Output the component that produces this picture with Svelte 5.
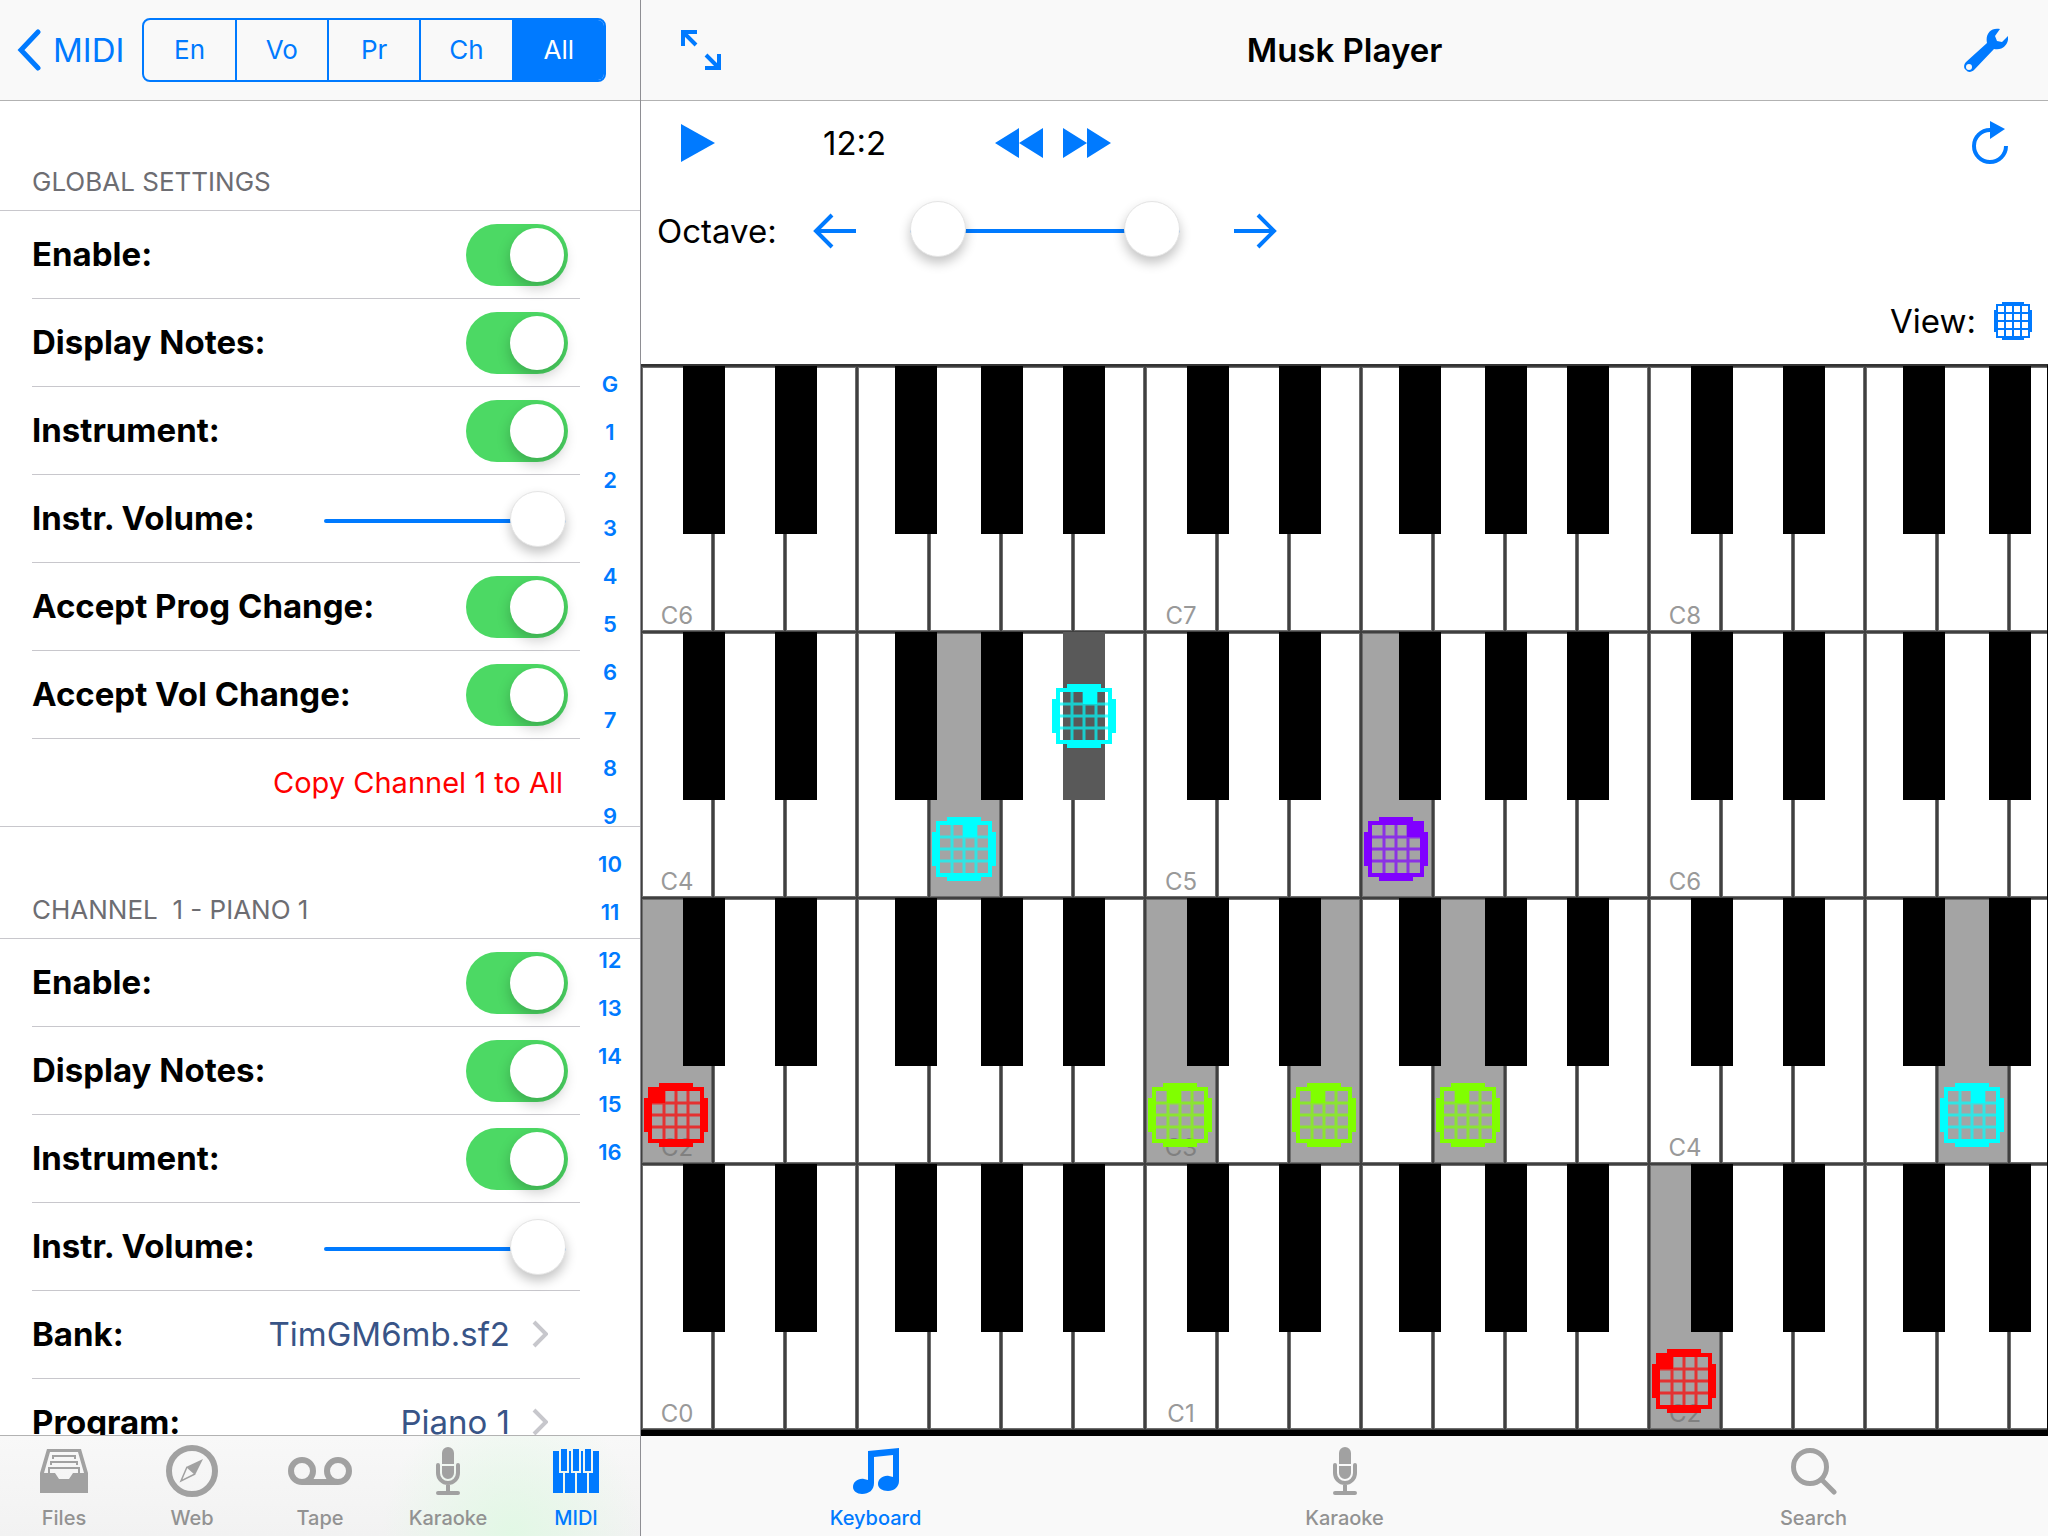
<script lang="ts">
	type Row = { label: string; kind: 'switch' | 'slider' | 'link'; value?: string };
	type Note = { octave: number; key: number; black?: boolean; channel: number };

	const filters = ['En', 'Vo', 'Pr', 'Ch', 'All'];
	let filter = $state('All');

	const globalRows: Row[] = [
		{ label: 'Enable:', kind: 'switch' },
		{ label: 'Display Notes:', kind: 'switch' },
		{ label: 'Instrument:', kind: 'switch' },
		{ label: 'Instr. Volume:', kind: 'slider' },
		{ label: 'Accept Prog Change:', kind: 'switch' },
		{ label: 'Accept Vol Change:', kind: 'switch' }
	];

	const channelRows: Row[] = [
		{ label: 'Enable:', kind: 'switch' },
		{ label: 'Display Notes:', kind: 'switch' },
		{ label: 'Instrument:', kind: 'switch' },
		{ label: 'Instr. Volume:', kind: 'slider' },
		{ label: 'Bank:', kind: 'link', value: 'TimGM6mb.sf2' },
		{ label: 'Program:', kind: 'link', value: 'Piano 1' }
	];

	const sectionIndex = ['G', ...Array.from({ length: 16 }, (_, i) => String(i + 1))];

	const leftTabs = ['Files', 'Web', 'Tape', 'Karaoke', 'MIDI'];
	const rightTabs = ['Keyboard', 'Karaoke', 'Search'];

	// left edge of each black key inside an octave
	const blackKeys = [42, 134, 254, 340, 422];
	const channelColors = ['#ff0000', '#80ff00', '#00ffff', '#8000ff'];

	const keyboards: { base: number; notes: Note[] }[] = [
		{ base: 6, notes: [] },
		{
			base: 4,
			notes: [
				{ octave: 4, key: 4, channel: 2 },
				{ octave: 4, key: 4, black: true, channel: 2 },
				{ octave: 5, key: 3, channel: 3 }
			]
		},
		{
			base: 2,
			notes: [
				{ octave: 2, key: 0, channel: 0 },
				{ octave: 3, key: 0, channel: 1 },
				{ octave: 3, key: 2, channel: 1 },
				{ octave: 3, key: 4, channel: 1 },
				{ octave: 4, key: 4, channel: 2 }
			]
		},
		{ base: 0, notes: [{ octave: 2, key: 0, channel: 0 }] }
	];

	function findNote(notes: Note[], octave: number, key: number, black = false) {
		return notes.find((n) => n.octave === octave && n.key === key && !!n.black === black);
	}
</script>

{#snippet chevron()}
	<svg class="chevron" width="16" height="28" viewBox="0 0 16 28" aria-hidden="true">
		<path d="M2 2l12 12L2 26" fill="none" stroke="#c7c7cc" stroke-width="4" />
	</svg>
{/snippet}

{#snippet marker(channel: number)}
	<svg class="marker" width="64" height="64" viewBox="0 0 64 64" aria-hidden="true">
		<g fill={channelColors[channel]} stroke={channelColors[channel]}>
			<path d="M15 0h34v7H15zM15 57h34v7H15zM0 15h7v34H0zM57 15h7v34h-7z" stroke="none" />
			<rect x="6" y="6" width="52" height="52" fill="none" stroke-width="4" />
			<path
				d="M20 8v48M32 8v48M44 8v48M8 20h48M8 32h48M8 44h48"
				stroke-width="3"
				stroke-opacity="0.7"
			/>
			<rect x={7 + channel * 12} y="6" width="14" height="14" stroke="none" />
		</g>
	</svg>
{/snippet}

{#snippet tabIcon(name: string)}
	{#if name === 'Files'}
		<svg width="48" height="44" viewBox="0 0 48 44" fill="currentColor" aria-hidden="true">
			<path fill-rule="evenodd" d="M7 0h34l7 24v20H0V24zM10 3L4 24h11l4 6h10l4-6h11L38 3z" />
			<path
				d="M13 10V7h22v3M11 16v-3h26v3M9 25v-6h30v6"
				fill="none"
				stroke="currentColor"
				stroke-width="2"
			/>
		</svg>
	{:else if name === 'Web'}
		<svg width="52" height="52" viewBox="0 0 52 52" aria-hidden="true">
			<circle cx="26" cy="26" r="23" fill="none" stroke="currentColor" stroke-width="6" />
			<path d="M37 14L20 22l9 8z" fill="currentColor" />
			<path d="M21 22l-6 14 14-7" fill="none" stroke="currentColor" stroke-width="1.5" />
		</svg>
	{:else if name === 'Tape'}
		<svg width="64" height="28" viewBox="0 0 64 28" aria-hidden="true">
			<g fill="none" stroke="currentColor" stroke-width="6">
				<circle cx="14" cy="14" r="11" />
				<circle cx="50" cy="14" r="11" />
				<path d="M14 25h36" />
			</g>
		</svg>
	{:else if name === 'Karaoke'}
		<svg width="24" height="48" viewBox="0 0 24 48" aria-hidden="true">
			<path d="M6 17V6a6 6 0 0 1 12 0v11zM6 19h12v7a6 6 0 0 1-12 0z" fill="currentColor" />
			<path
				d="M2 18v8a10 10 0 0 0 20 0v-8M12 36v9M2 46h20"
				fill="none"
				stroke="currentColor"
				stroke-width="4"
				stroke-linecap="round"
			/>
		</svg>
	{:else if name === 'MIDI'}
		<svg width="46" height="44" viewBox="0 0 46 44" fill="currentColor" aria-hidden="true">
			<path
				d="M0 2h6v22h4v20H0zM16 2h2v22h4v20H12V24h4zM28 2h2v22h4v20H24V24h4zM40 2h6v42H36V24h4z"
			/>
			<path d="M8 0h6v22H8zM20 0h6v22h-6zM32 0h6v22h-6z" />
		</svg>
	{:else if name === 'Keyboard'}
		<svg width="46" height="46" viewBox="0 0 46 46" fill="currentColor" aria-hidden="true">
			<path
				d="M15 3L46 0v33c0 6-5 10-11 10-6 0-10-3-10-7 0-5 5-9 11-8l4 1V7L21 9v26c0 7-5 11-12 11-5 0-9-3-9-7 0-5 5-9 11-8l4 1z"
			/>
		</svg>
	{:else}
		<svg width="46" height="47" viewBox="0 0 46 47" aria-hidden="true">
			<g fill="none" stroke="currentColor" stroke-width="5">
				<circle cx="19" cy="19" r="16.5" />
				<path d="M31 32l12 12" stroke-linecap="round" />
			</g>
		</svg>
	{/if}
{/snippet}

{#snippet rows(items: Row[], prefix: string)}
	{#each items as row, i}
		<div class="row">
			{#if row.kind === 'link'}
				<span class="label">{row.label}</span>
				<a class="value" href="#{prefix}-{i}">{row.value}{@render chevron()}</a>
			{:else}
				<label class="label" for="{prefix}-{i}">{row.label}</label>
				{#if row.kind === 'switch'}
					<input id="{prefix}-{i}" class="switch" type="checkbox" checked />
				{:else}
					<input id="{prefix}-{i}" class="volume" type="range" min="0" max="127" value="127" />
				{/if}
			{/if}
		</div>
	{/each}
{/snippet}

<div class="app">
	<aside class="sidebar">
		<header class="bar sidebar-bar">
			<button class="back">
				<svg width="24" height="42" viewBox="0 0 24 42" aria-hidden="true">
					<path
						d="M21 3L4 21l17 18"
						fill="none"
						stroke="currentColor"
						stroke-width="5"
						stroke-linecap="round"
					/>
				</svg>
				MIDI
			</button>
			<div class="segments">
				{#each filters as name}
					<button class:selected={filter === name} onclick={() => (filter = name)}>{name}</button>
				{/each}
			</div>
		</header>

		<div class="settings">
			<section>
				<h2 class="first">GLOBAL SETTINGS</h2>
				<div class="rows">
					{@render rows(globalRows, 'global')}
					<div class="row copy">
						<button>Copy Channel 1 to All</button>
					</div>
				</div>
			</section>
			<section>
				<h2>CHANNEL&nbsp; 1 - PIANO 1</h2>
				<div class="rows">
					{@render rows(channelRows, 'channel')}
				</div>
			</section>

			<nav class="index" aria-label="Sections">
				{#each sectionIndex as entry}
					<a href="#section-{entry}">{entry}</a>
				{/each}
			</nav>
		</div>

		<nav class="tabs tinted">
			{#each leftTabs as tab}
				<button class="tab" class:active={tab === 'MIDI'}>
					<span class="icon">{@render tabIcon(tab)}</span>
					{tab}
				</button>
			{/each}
		</nav>
	</aside>

	<main class="player">
		<header class="bar player-bar">
			<button aria-label="Full screen">
				<svg width="40" height="40" viewBox="0 0 40 40" aria-hidden="true">
					<path
						d="M2 16V2h14M3 3l12 12M38 24v14H24M37 37L25 25"
						fill="none"
						stroke="currentColor"
						stroke-width="4"
					/>
				</svg>
			</button>
			<h1>Musk Player</h1>
			<button aria-label="Settings">
				<svg width="44" height="44" viewBox="0 0 44 44" fill="currentColor" aria-hidden="true">
					<path
						fill-rule="evenodd"
						d="M36 1l-5 7 2 5 5 1 6-6c1 7-4 15-14 13L10 42c-2 2-6 3-8 0-3-2-2-6 0-8l21-19C21 6 27-1 36 1zM5 36a3 3 0 1 0 0 6 3 3 0 0 0 0-6z"
					/>
				</svg>
			</button>
		</header>

		<div class="controls transport">
			<button aria-label="Play">
				<svg width="34" height="38" viewBox="0 0 34 38" fill="currentColor" aria-hidden="true">
					<path d="M0 0l34 19L0 38z" />
				</svg>
			</button>
			<span class="time">12:2</span>
			<button aria-label="Rewind">
				<svg width="48" height="30" viewBox="0 0 48 30" fill="currentColor" aria-hidden="true">
					<path d="M24 0v30L0 15zM48 0v30L24 15z" />
				</svg>
			</button>
			<button class="forward" aria-label="Fast forward">
				<svg width="48" height="30" viewBox="0 0 48 30" fill="currentColor" aria-hidden="true">
					<path d="M0 0l24 15L0 30zM24 0l24 15-24 15z" />
				</svg>
			</button>
			<button class="reload" aria-label="Restart">
				<svg width="36" height="44" viewBox="0 0 36 44" aria-hidden="true">
					<path d="M34 25a16 16 0 1 1-16-16" fill="none" stroke="currentColor" stroke-width="4" />
					<path d="M18 0l15 8-15 10z" fill="currentColor" />
				</svg>
			</button>
		</div>

		<div class="controls octave">
			<span class="caption">Octave:</span>
			<button aria-label="Octave down">
				<svg width="44" height="36" viewBox="0 0 44 36" aria-hidden="true">
					<path
						d="M43 18H4M19 2L3 18l16 16"
						fill="none"
						stroke="currentColor"
						stroke-width="4"
					/>
				</svg>
			</button>
			<div class="span">
				<input type="range" min="0" max="10" value="0" aria-label="Lowest octave" />
				<input type="range" min="0" max="10" value="10" aria-label="Highest octave" />
			</div>
			<button aria-label="Octave up">
				<svg width="44" height="36" viewBox="0 0 44 36" aria-hidden="true">
					<path
						d="M1 18h39M25 2l16 16-16 16"
						fill="none"
						stroke="currentColor"
						stroke-width="4"
					/>
				</svg>
			</button>
		</div>

		<div class="controls view">
			<span>View:</span>
			<button aria-label="Note display">
				<svg width="38" height="38" viewBox="0 0 38 38" aria-hidden="true">
					<path
						d="M3 3h32v32H3zM11 3v32M19 3v32M27 3v32M3 11h32M3 19h32M3 27h32M8 1h22M8 37h22M1 8v22M37 8v22"
						fill="none"
						stroke="currentColor"
						stroke-width="2"
					/>
				</svg>
			</button>
		</div>

		<div class="keyboards">
			{#each keyboards as board}
				<div class="keyboard">
					{#each [0, 1, 2] as offset}
						{@const octave = board.base + offset}
						<div class="octave-keys">
							{#each [0, 1, 2, 3, 4, 5, 6] as key}
								{@const note = findNote(board.notes, octave, key)}
								<button class="white" class:pressed={note} aria-label="{'CDEFGAB'[key]}{octave}">
									{#if key === 0}<span>C{octave}</span>{/if}
									{#if note}{@render marker(note.channel)}{/if}
								</button>
							{/each}
							{#each blackKeys as left, key}
								{@const note = findNote(board.notes, octave, key, true)}
								<button
									class="black"
									class:pressed={note}
									style="left: {left}px"
									aria-label="{'CDFGA'[key]}#{octave}"
								>
									{#if note}{@render marker(note.channel)}{/if}
								</button>
							{/each}
						</div>
					{/each}
				</div>
			{/each}
		</div>

		<nav class="tabs">
			{#each rightTabs as tab}
				<button class="tab" class:active={tab === 'Keyboard'}>
					<span class="icon">{@render tabIcon(tab)}</span>
					{tab}
				</button>
			{/each}
		</nav>
	</main>
</div>

<style>
	.app {
		display: flex;
		height: 100vh;
		min-height: 1100px;
		background: #fff;
		color: #000;
		font-family: Inter, 'Liberation Sans', sans-serif;
		font-size: 33px;
		line-height: 40px;
	}

	button {
		margin: 0;
		padding: 0;
		border: none;
		background: none;
		color: #007aff;
		font: inherit;
		cursor: pointer;
	}

	a {
		text-decoration: none;
	}

	svg {
		display: block;
	}

	.sidebar {
		flex: 0 0 640px;
		display: flex;
		flex-direction: column;
		min-width: 0;
		border-right: 1px solid #8e8e93;
	}

	.player {
		flex: 1;
		display: flex;
		flex-direction: column;
		min-width: 0;
	}

	.bar {
		flex: none;
		display: flex;
		align-items: center;
		height: 100px;
		border-bottom: 1px solid #b2b2b2;
		background: #f9f9f9;
	}

	.sidebar-bar {
		gap: 18px;
		padding: 0 34px 0 17px;
	}

	.back {
		display: flex;
		align-items: center;
		gap: 12px;
	}

	.segments {
		flex: 1;
		display: flex;
		box-sizing: border-box;
		height: 64px;
		overflow: hidden;
		border: 2px solid #007aff;
		border-radius: 8px;
		font-size: 26px;
	}

	.segments button {
		flex: 1;
	}

	.segments button + button {
		border-left: 2px solid #007aff;
	}

	.segments .selected {
		background: #007aff;
		color: #fff;
	}

	.settings {
		position: relative;
		flex: 1;
		min-height: 0;
		overflow: hidden;
	}

	h2 {
		display: flex;
		align-items: flex-end;
		box-sizing: border-box;
		height: 112px;
		margin: 0;
		padding: 0 32px 12px;
		border-bottom: 1px solid #c8c7cc;
		color: #6d6d72;
		font-size: 26px;
		font-weight: 400;
		line-height: 32px;
	}

	h2.first {
		height: 110px;
	}

	.row {
		display: flex;
		align-items: center;
		justify-content: space-between;
		box-sizing: border-box;
		height: 88px;
		margin: 0 60px 0 32px;
		padding-right: 12px;
		border-bottom: 1px solid #c8c7cc;
	}

	.label {
		padding-bottom: 2px;
		font-weight: 700;
	}

	.copy {
		justify-content: flex-end;
		margin: 0;
		padding-right: 77px;
	}

	.copy button {
		color: #ff0000;
		font-size: 29px;
	}

	.value {
		display: flex;
		align-items: center;
		gap: 22px;
		padding: 0 20px 2px 0;
		color: #385487;
	}

	.switch {
		display: flex;
		justify-content: flex-end;
		appearance: none;
		box-sizing: border-box;
		width: 102px;
		height: 62px;
		margin: 0;
		padding: 4px;
		border-radius: 31px;
		background: #4cd964;
	}

	.switch::before {
		content: '';
		width: 54px;
		height: 54px;
		border-radius: 50%;
		background: #fff;
		box-shadow: 0 6px 14px rgba(0, 0, 0, 0.22);
	}

	.switch:not(:checked) {
		justify-content: flex-start;
		background: #e5e5ea;
	}

	input[type='range'] {
		appearance: none;
		height: 56px;
		margin: 0;
		background: none;
	}

	input[type='range']::-webkit-slider-runnable-track {
		height: 4px;
		border-radius: 2px;
		background: #007aff;
	}

	input[type='range']::-webkit-slider-thumb {
		appearance: none;
		width: 56px;
		height: 56px;
		margin-top: -28px;
		border: 1px solid #e4e4e4;
		border-radius: 50%;
		background: #fff;
		box-shadow: 0 6px 12px rgba(0, 0, 0, 0.24);
	}

	input[type='range'].volume {
		width: 242px;
		margin: 4px 2px 0 0;
	}

	.index {
		position: absolute;
		top: 0;
		right: 0;
		bottom: 0;
		display: flex;
		flex-direction: column;
		justify-content: center;
		width: 60px;
		font-size: 22px;
		font-weight: 600;
		line-height: 48px;
		text-align: center;
	}

	.index a {
		color: #007aff;
	}

	.tabs {
		flex: none;
		display: flex;
		height: 100px;
		background: #f9f9f9;
	}

	.tinted {
		border-top: 1px solid #b2b2b2;
		background:
			radial-gradient(ellipse 130px 140px at 80% 100%, #e2f8e5, transparent),
			linear-gradient(#f8f8f8, #f2f2f2);
	}

	.tab {
		flex: 1;
		display: flex;
		flex-direction: column;
		align-items: center;
		color: #929292;
		font-size: 20px;
		font-weight: 500;
		line-height: 24px;
	}

	.icon {
		display: flex;
		align-items: center;
		height: 70px;
		color: #a1a1a1;
	}

	.tab.active,
	.tab.active .icon {
		color: #007aff;
	}

	.player-bar {
		justify-content: space-between;
		padding: 0 40px;
	}

	.player-bar button {
		width: 44px;
	}

	h1 {
		margin: 0;
		font-size: 33px;
		font-weight: 600;
	}

	.controls {
		flex: none;
		display: flex;
		align-items: center;
	}

	.transport {
		height: 84px;
		padding: 0 40px;
	}

	.time {
		width: 172px;
		margin-left: 108px;
	}

	.forward {
		margin-left: 20px;
	}

	.reload {
		margin-left: auto;
	}

	.octave {
		height: 92px;
		padding-left: 16px;
	}

	.caption {
		width: 156px;
	}

	.span {
		position: relative;
		width: 270px;
		height: 56px;
		margin: 0 53px;
	}

	.span input {
		position: absolute;
		inset: 0;
		width: 100%;
		pointer-events: none;
	}

	.span input::-webkit-slider-thumb {
		pointer-events: auto;
	}

	.span input + input::-webkit-slider-runnable-track {
		background: none;
	}

	.view {
		justify-content: flex-end;
		gap: 18px;
		height: 87px;
		padding-right: 16px;
	}

	.keyboards {
		flex: 1;
		display: flex;
		flex-direction: column;
		min-height: 0;
		border-top: 2px solid #333;
		border-right: 1px solid #000;
		border-bottom: 6px solid #000;
	}

	.keyboard {
		flex: 1;
		display: flex;
		overflow: hidden;
	}

	.octave-keys {
		position: relative;
		flex: none;
		display: flex;
	}

	.white {
		position: relative;
		display: flex;
		align-items: flex-end;
		justify-content: center;
		width: 72px;
		padding-bottom: 4px;
		background: #fff;
		box-shadow:
			inset 0 0 0 1px #404040,
			inset 0 0 0 2px #6e6e6e;
		color: #999;
		font-size: 24px;
		line-height: 24px;
	}

	.white.pressed {
		background: #a4a4a4;
		color: #808080;
	}

	.white .marker {
		position: absolute;
		bottom: 17px;
		left: 3px;
	}

	.black {
		position: absolute;
		top: 0;
		display: flex;
		align-items: center;
		justify-content: center;
		width: 42px;
		height: 63%;
		background: #000;
	}

	.black.pressed {
		background: #595959;
	}

	.black .marker {
		flex: none;
	}
</style>
